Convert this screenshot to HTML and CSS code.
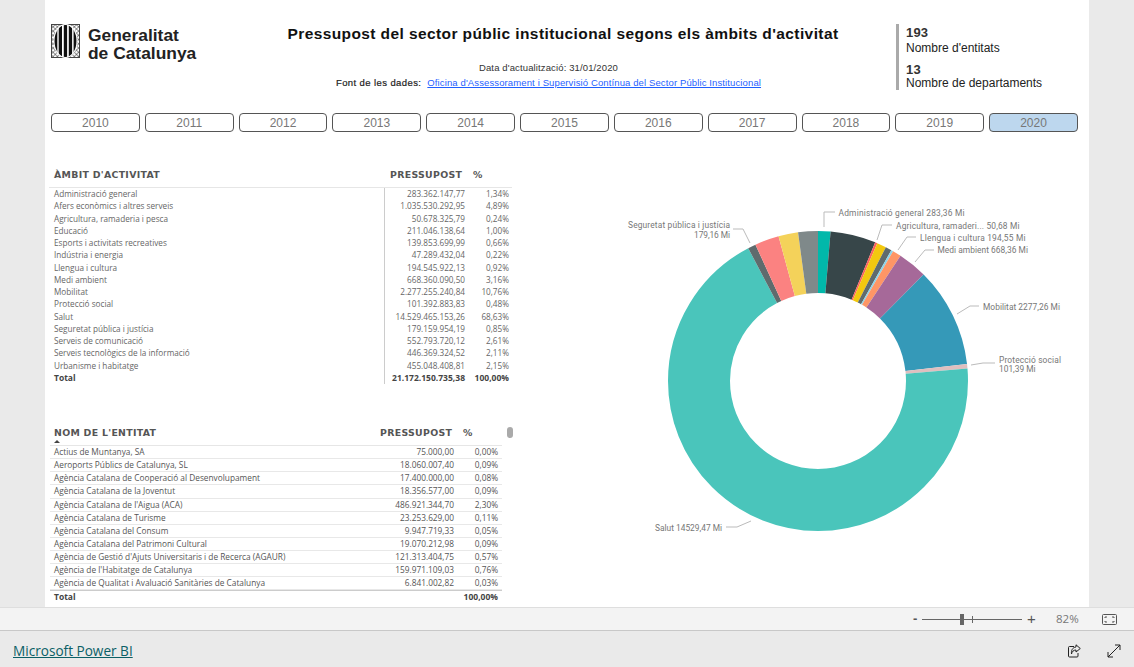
FILE: index.html
```html
<!DOCTYPE html>
<html lang="ca">
<head>
<meta charset="utf-8">
<title>Pressupost del sector públic institucional</title>
<link rel="stylesheet" href="styles.css">
</head>
<body>
<div class="stage">
  <main class="canvas">
    <header class="head">
      <div class="logo">
        <svg class="emblem" width="29" height="34" viewBox="0 0 29 34">
          <defs>
            <pattern id="knot" width="3" height="3" patternUnits="userSpaceOnUse" patternTransform="rotate(45)">
              <rect width="3" height="3" fill="#fff"/>
              <path d="M0 0H3M0 0V3" stroke="#333" stroke-width="1"/>
            </pattern>
            <clipPath id="shield"><ellipse cx="14.5" cy="17" rx="11" ry="16"/></clipPath>
          </defs>
          <rect x=".5" y=".5" width="28" height="33" fill="url(#knot)" stroke="#444"/>
          <ellipse cx="14.5" cy="17" rx="12" ry="17" fill="#fff"/>
          <g clip-path="url(#shield)" fill="#111">
            <rect x="3" y="0" width="3.300" height="34"/>
            <rect x="7.700" y="0" width="3.300" height="34"/>
            <rect x="12.800" y="0" width="3.300" height="34"/>
            <rect x="17.800" y="0" width="3.300" height="34"/>
            <rect x="22.600" y="0" width="3.300" height="34"/>
          </g>
        </svg>
        <div class="logo-text">Generalitat<br>de Catalunya</div>
      </div>
      <div class="heading">
        <h1 class="title">Pressupost del sector públic institucional segons els àmbits d'activitat</h1>
        <p class="date">Data d'actualització: 31/01/2020</p>
        <p class="source"><span class="source-label">Font de les dades:</span><a class="source-link" href="#">Oficina d'Assessorament i Supervisió Contínua del Sector Públic Institucional</a></p>
      </div>
      <aside class="kpis">
        <div class="kpi-num">193</div>
        <div class="kpi-label">Nombre d'entitats</div>
        <div class="kpi-num kpi-second">13</div>
        <div class="kpi-label">Nombre de departaments</div>
      </aside>
    </header>

    <nav class="years">
      <button class="year">2010</button>
      <button class="year">2011</button>
      <button class="year">2012</button>
      <button class="year">2013</button>
      <button class="year">2014</button>
      <button class="year">2015</button>
      <button class="year">2016</button>
      <button class="year">2017</button>
      <button class="year">2018</button>
      <button class="year">2019</button>
      <button class="year year-on">2020</button>
    </nav>

    <section class="body">
      <div class="tables">
        <div class="table-a">
          <div class="thead-a"><span class="th-name">ÀMBIT D'ACTIVITAT</span><span class="th-val">PRESSUPOST</span><span class="th-pct">%</span></div>
          <div class="row-a"><span class="name">Administració general</span><span class="val">283.362.147,77</span><span class="pct">1,34%</span></div>
          <div class="row-a"><span class="name">Afers econòmics i altres serveis</span><span class="val">1.035.530.292,95</span><span class="pct">4,89%</span></div>
          <div class="row-a"><span class="name">Agricultura, ramaderia i pesca</span><span class="val">50.678.325,79</span><span class="pct">0,24%</span></div>
          <div class="row-a"><span class="name">Educació</span><span class="val">211.046.138,64</span><span class="pct">1,00%</span></div>
          <div class="row-a"><span class="name">Esports i activitats recreatives</span><span class="val">139.853.699,99</span><span class="pct">0,66%</span></div>
          <div class="row-a"><span class="name">Indústria i energia</span><span class="val">47.289.432,04</span><span class="pct">0,22%</span></div>
          <div class="row-a"><span class="name">Llengua i cultura</span><span class="val">194.545.922,13</span><span class="pct">0,92%</span></div>
          <div class="row-a"><span class="name">Medi ambient</span><span class="val">668.360.090,50</span><span class="pct">3,16%</span></div>
          <div class="row-a"><span class="name">Mobilitat</span><span class="val">2.277.255.240,84</span><span class="pct">10,76%</span></div>
          <div class="row-a"><span class="name">Protecció social</span><span class="val">101.392.883,83</span><span class="pct">0,48%</span></div>
          <div class="row-a"><span class="name">Salut</span><span class="val">14.529.465.153,26</span><span class="pct">68,63%</span></div>
          <div class="row-a"><span class="name">Seguretat pública i justícia</span><span class="val">179.159.954,19</span><span class="pct">0,85%</span></div>
          <div class="row-a"><span class="name">Serveis de comunicació</span><span class="val">552.793.720,12</span><span class="pct">2,61%</span></div>
          <div class="row-a"><span class="name">Serveis tecnològics de la informació</span><span class="val">446.369.324,52</span><span class="pct">2,11%</span></div>
          <div class="row-a"><span class="name">Urbanisme i habitatge</span><span class="val">455.048.408,81</span><span class="pct">2,15%</span></div>
          <div class="row-a row-total"><span class="name">Total</span><span class="val">21.172.150.735,38</span><span class="pct">100,00%</span></div>
        </div>

        <div class="entity-wrap">
          <div class="table-b">
            <div class="thead-b"><span class="th-name">NOM DE L'ENTITAT<i class="caret"></i></span><span class="th-val">PRESSUPOST</span><span class="th-pct">%</span></div>
            <div class="row-b"><span class="name">Actius de Muntanya, SA</span><span class="val">75.000,00</span><span class="pct">0,00%</span></div>
            <div class="row-b"><span class="name">Aeroports Públics de Catalunya, SL</span><span class="val">18.060.007,40</span><span class="pct">0,09%</span></div>
            <div class="row-b"><span class="name">Agència Catalana de Cooperació al Desenvolupament</span><span class="val">17.400.000,00</span><span class="pct">0,08%</span></div>
            <div class="row-b"><span class="name">Agència Catalana de la Joventut</span><span class="val">18.356.577,00</span><span class="pct">0,09%</span></div>
            <div class="row-b"><span class="name">Agència Catalana de l'Aigua (ACA)</span><span class="val">486.921.344,70</span><span class="pct">2,30%</span></div>
            <div class="row-b"><span class="name">Agència Catalana de Turisme</span><span class="val">23.253.629,00</span><span class="pct">0,11%</span></div>
            <div class="row-b"><span class="name">Agència Catalana del Consum</span><span class="val">9.947.719,33</span><span class="pct">0,05%</span></div>
            <div class="row-b"><span class="name">Agència Catalana del Patrimoni Cultural</span><span class="val">19.070.212,98</span><span class="pct">0,09%</span></div>
            <div class="row-b"><span class="name">Agència de Gestió d'Ajuts Universitaris i de Recerca (AGAUR)</span><span class="val">121.313.404,75</span><span class="pct">0,57%</span></div>
            <div class="row-b"><span class="name">Agència de l'Habitatge de Catalunya</span><span class="val">159.971.109,03</span><span class="pct">0,76%</span></div>
            <div class="row-b"><span class="name">Agència de Qualitat i Avaluació Sanitàries de Catalunya</span><span class="val">6.841.002,82</span><span class="pct">0,03%</span></div>
            <div class="row-b row-b-total"><span class="name">Total</span><span class="val"></span><span class="pct">100,00%</span></div>
          </div>
          <div class="thumb"></div>
        </div>
      </div>

      <svg class="chart" width="569" height="474" viewBox="520 133 569 474">
        <g fill="none" stroke-width="62" transform="rotate(-90 818 382)">
          <circle cx="818" cy="382" r="119" pathLength="100" stroke="#01B8AA" stroke-dasharray="1.34 100" stroke-dashoffset="0"/>
          <circle cx="818" cy="382" r="119" pathLength="100" stroke="#374649" stroke-dasharray="4.89 100" stroke-dashoffset="-1.34"/>
          <circle cx="818" cy="382" r="119" pathLength="100" stroke="#FD625E" stroke-dasharray="0.24 100" stroke-dashoffset="-6.23"/>
          <circle cx="818" cy="382" r="119" pathLength="100" stroke="#F2C80F" stroke-dasharray="1 100" stroke-dashoffset="-6.47"/>
          <circle cx="818" cy="382" r="119" pathLength="100" stroke="#5F6B6D" stroke-dasharray="0.66 100" stroke-dashoffset="-7.47"/>
          <circle cx="818" cy="382" r="119" pathLength="100" stroke="#8AD4EB" stroke-dasharray="0.22 100" stroke-dashoffset="-8.13"/>
          <circle cx="818" cy="382" r="119" pathLength="100" stroke="#FE9666" stroke-dasharray="0.92 100" stroke-dashoffset="-8.35"/>
          <circle cx="818" cy="382" r="119" pathLength="100" stroke="#A66999" stroke-dasharray="3.16 100" stroke-dashoffset="-9.27"/>
          <circle cx="818" cy="382" r="119" pathLength="100" stroke="#3599B8" stroke-dasharray="10.76 100" stroke-dashoffset="-12.43"/>
          <circle cx="818" cy="382" r="119" pathLength="100" stroke="#DFBFBF" stroke-dasharray="0.48 100" stroke-dashoffset="-23.19"/>
          <circle cx="818" cy="382" r="119" pathLength="100" stroke="#4AC5BB" stroke-dasharray="68.63 100" stroke-dashoffset="-23.67"/>
          <circle cx="818" cy="382" r="119" pathLength="100" stroke="#5F6B6D" stroke-dasharray="0.85 100" stroke-dashoffset="-92.3"/>
          <circle cx="818" cy="382" r="119" pathLength="100" stroke="#FB8281" stroke-dasharray="2.61 100" stroke-dashoffset="-93.15"/>
          <circle cx="818" cy="382" r="119" pathLength="100" stroke="#F4D25A" stroke-dasharray="2.11 100" stroke-dashoffset="-95.76"/>
          <circle cx="818" cy="382" r="119" pathLength="100" stroke="#7F898A" stroke-dasharray="2.13 100" stroke-dashoffset="-97.87"/>
        </g>
        <g class="leaders">
          <polyline points="824,228 824,213 835,213"/>
          <polyline points="877,241 882,226 892,226"/>
          <polyline points="898,251 907,238 916,238"/>
          <polyline points="915,263 925,251 934,251"/>
          <polyline points="957,315 970,307 979,307"/>
          <polyline points="971,366 983,364 995,364"/>
          <polyline points="750,244 743,230 733,230"/>
          <polyline points="751,522 737,528 726,528"/>
        </g>
        <g class="labels">
          <text x="838.5" y="217" textLength="126">Administració general 283,36 Mi</text>
          <text x="896" y="230" textLength="123.500">Agricultura, ramaderi... 50,68 Mi</text>
          <text x="920" y="242" textLength="105.500">Llengua i cultura 194,55 Mi</text>
          <text x="937.5" y="254" textLength="90.500">Medi ambient 668,36 Mi</text>
          <text x="983" y="311" textLength="77">Mobilitat 2277,26 Mi</text>
          <text x="999" y="364" textLength="62">Protecció social</text>
          <text x="999" y="373" textLength="36.500">101,39 Mi</text>
          <text class="end" x="730" y="229" textLength="102">Seguretat pública i justícia</text>
          <text class="end" x="730" y="239" textLength="36">179,16 Mi</text>
          <text class="end" x="722" y="532" textLength="67">Salut 14529,47 Mi</text>
        </g>
      </svg>
    </section>
  </main>
</div>

<div class="zoombar">
  <span class="zoom-minus">-</span>
  <span class="slider"><i class="slider-tick"></i><i class="slider-thumb"></i></span>
  <span class="zoom-plus">+</span>
  <span class="zoom-value">82%</span>
  <svg class="fit" width="15" height="11" viewBox="0 0 15 11" fill="none" stroke="#555">
    <rect x=".5" y=".5" width="14" height="10" rx="1"/>
    <path d="M3 4V3H5M10 3H12V4M3 7V8H5M10 8H12V7"/>
  </svg>
</div>

<footer class="foot">
  <a class="brand" href="#">Microsoft Power BI</a>
  <div class="foot-icons">
    <svg width="14" height="14" viewBox="0 0 14 14" fill="none" stroke="#222" stroke-width="1">
      <path d="M7 2.5H2.5A1 1 0 0 0 1.500 3.500V12A1 1 0 0 0 2.500 13H10A1 1 0 0 0 11 12V9"/>
      <path d="M9 .8L13.300 4.500L9 8V6C6.500 6 5 7.500 4.500 10C4 6.500 5.500 3.300 9 3Z"/>
    </svg>
    <svg width="14" height="14" viewBox="0 0 14 14" fill="none" stroke="#222" stroke-width="1">
      <path d="M1 13L13 1M8 1H13V6M1 8V13H6"/>
    </svg>
  </div>
</footer>
</body>
</html>
```
FILE: styles.css
```css
* { box-sizing: border-box; }
html, body { margin: 0; padding: 0; }
body {
  width: 1134px;
  height: 667px;
  overflow: hidden;
  background: #eaeaea;
  font-family: "Liberation Sans", Arial, sans-serif;
}

.stage { height: 607px; padding-left: 45px; }
.canvas { width: 1044px; height: 607px; background: #fff; overflow: hidden; }

/* header */
.head { display: flex; height: 113px; }
.logo { width: 185px; padding: 24px 0 0 6px; display: flex; gap: 8px; align-items: flex-start; }
.emblem { flex: none; }
.logo-text {
  font-size: 17.400px;
  font-weight: 700;
  line-height: 18px;
  color: #222;
  margin-top: 2px;
}
.heading { width: 666px; padding-top: 24px; text-align: center; }
.title {
  margin: 0;
  font-size: 15.500px;
  line-height: 20px;
  font-weight: 700;
  letter-spacing: .4px;
  color: #111;
}
.date {
  margin: 17px 29px 0 0;
  font-size: 9.500px;
  line-height: 14px;
  letter-spacing: .13px;
  color: #333;
}
.source { margin: 0 29px 0 0; font-size: 9.500px; line-height: 16px; letter-spacing: .12px; }
.source-label { color: #222; letter-spacing: .4px; -webkit-text-stroke: .2px #222; }
.source-link { margin-left: 6px; color: #1f5fff; text-decoration: underline; }
.kpis {
  margin: 24px 0 0 0;
  height: 66px;
  width: 160px;
  border-left: 3px solid #aaa;
  padding: 1px 0 0 7px;
}
.kpi-num { font-size: 13px; font-weight: 700; line-height: 15px; color: #333; letter-spacing: .2px; }
.kpi-label { font-size: 12px; line-height: 16px; color: #222; }
.kpi-second { margin: 6px 0 -2px; }

/* year slicer */
.years { display: flex; gap: 5px; height: 19px; margin: 0 11px 0 6px; }
.year {
  flex: 1;
  padding: 0;
  height: 19px;
  background: #fff;
  border: 1px solid #555;
  border-bottom-width: 1.5px;
  border-radius: 4px;
  font: 12px/16px "Liberation Sans", Arial, sans-serif;
  color: #777;
}
.year-on { background: #bdd7ee; }

/* body */
.body { display: flex; }
.tables { width: 475px; flex: none; padding: 35px 0 0 4px; }
.chart { flex: none; display: block; }
.th-name, .th-val, .th-pct {
  font-family: "DejaVu Sans", sans-serif;
  font-size: 9.400px;
  font-weight: 700;
  letter-spacing: .3px;
  color: #555;
  white-space: nowrap;
}

/* budget table */
.table-a { width: 463px; }
.thead-a { display: flex; height: 21px; border-bottom: 1px solid #e6e6e6; padding: 2px 3px 0 5px; line-height: 12px; }
.thead-a .th-name { width: 336px; }
.thead-a .th-val { width: 83px; }
.row-a, .row-b { display: flex; font-family: "Open Sans", sans-serif; font-size: 8.200px; color: #666; white-space: nowrap; }
.row-a { height: 12.27px; line-height: 12px; padding: 0 3px 0 5px; }
.row-a .name { width: 330px; }
.row-a .val { width: 81px; text-align: right; border-left: 1px solid #ccc; }
.row-a .pct { width: 44px; text-align: right; }
.row-total { font-size: 8.500px; font-weight: 700; color: #444; }

/* entity table */
.entity-wrap { display: flex; margin: 42px 0 0 1px; }
.table-b { width: 452px; }
.thead-b { display: flex; height: 20px; padding: 1px 4px 0 4px; border-bottom: 1px solid #e6e6e6; line-height: 12px; }
.thead-b .th-name { width: 326px; position: relative; }
.thead-b .th-val { width: 83px; }
.caret {
  position: absolute;
  left: 0;
  top: 13px;
  border: 3px solid transparent;
  border-top: 0;
  border-bottom-color: #444;
}
.row-b {
  height: 13.09px;
  line-height: 12px;
  padding: 0 4px;
  border-bottom: 1px solid #e8e8e8;
  font-size: 8.300px;
  color: #555;
}
.row-b .name { flex: 1; }
.row-b .val { width: 90px; text-align: right; }
.row-b .pct { width: 44px; text-align: right; }
.row-b-total {
  height: 16px;
  line-height: 12px;
  border-top: 1px solid #ccc;
  border-bottom: 0;
  font-size: 8.500px;
  font-weight: 700;
  color: #444;
}
.thumb { width: 6px; height: 11px; margin: 1px 0 0 5px; background: #aaa; border-radius: 3px; }

/* donut labels */
.leaders polyline { fill: none; stroke: #bbb; stroke-width: 1; }
.labels text { font-family: Roboto, sans-serif; font-size: 8.400px; fill: #777; }
.labels .end { text-anchor: end; }

/* zoom bar */
.zoombar {
  height: 24px;
  background: #f3f3f3;
  border-top: 1px solid #dedede;
  border-bottom: 1px solid #c8c8c8;
  display: flex;
  align-items: center;
  padding-left: 913px;
  color: #666;
}
.zoom-minus { width: 9px; font: 700 13px/16px "Liberation Sans", sans-serif; color: #555; }
.slider { width: 100px; height: 1px; background: #666; position: relative; }
.slider-thumb { position: absolute; left: 38px; top: -5px; width: 4px; height: 11px; background: #666; }
.slider-tick { position: absolute; left: 50px; top: -3px; width: 1px; height: 7px; background: #666; }
.zoom-plus { margin-left: 5px; width: 10px; font: 15px/16px "Liberation Sans", sans-serif; color: #555; }
.zoom-value { margin-left: 19px; width: 24px; font: 11.500px/16px "Open Sans", sans-serif; color: #777; }
.fit { margin-left: 22px; }

/* footer */
.foot { height: 36px; display: flex; align-items: center; justify-content: space-between; padding: 3px 13px 0; }
.brand { font: 13.600px/18px "Open Sans", sans-serif; color: #0b5f66; text-decoration: underline; }
.foot-icons { display: flex; gap: 26px; }
```
